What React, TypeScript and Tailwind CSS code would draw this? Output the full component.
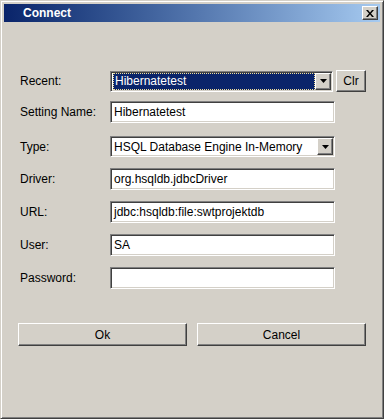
import { ReactNode } from "react";

const sunken =
  "border border-t-[#808080] border-l-[#808080] border-b-white border-r-white shadow-[inset_1px_1px_0_#404040,inset_-1px_-1px_0_#d4d0c8]";
const raised =
  "border border-t-white border-l-white border-b-[#404040] border-r-[#404040] shadow-[inset_-1px_-1px_0_#808080] bg-[#d4d0c8]";

function ArrowButton() {
  return (
    <div className={`${raised} flex h-[17px] w-[16px] shrink-0 items-center justify-center`}>
      <svg width="7" height="4" viewBox="0 0 7 4">
        <path d="M0 0h7L3.5 4z" fill="#000" />
      </svg>
    </div>
  );
}

function Combo({ value, selected, width }: { value: string; selected?: boolean; width: string }) {
  return (
    <div className={`${sunken} ${width} flex h-[21px] items-center bg-white p-[1px]`}>
      <div className="flex h-full flex-1 items-center pl-[1px]">
        {selected ? (
          <div className="flex h-[17px] w-full items-center border border-dotted border-[#f0df9a] bg-[#0a246a] pl-[1px] text-white">
            {value}
          </div>
        ) : (
          <span className="pl-[1px]">{value}</span>
        )}
      </div>
      <ArrowButton />
    </div>
  );
}

function Field({ value }: { value?: string }) {
  return (
    <div className={`${sunken} flex h-[22px] w-[225px] items-center bg-white pl-[3px]`}>
      {value}
    </div>
  );
}

function Row({ label, top, children }: { label: string; top: string; children: ReactNode }) {
  return (
    <div className={`flex items-center ${top}`}>
      <div className="w-[90px]">{label}</div>
      {children}
    </div>
  );
}

export default function App() {
  return (
    <div className="h-[419px] w-[384px] bg-[#d4d0c8] font-['Liberation_Sans',Arial,sans-serif] text-[12px] text-black">
      <div className="flex h-full w-full flex-col border border-t-[#d4d0c8] border-l-[#d4d0c8] border-b-[#404040] border-r-[#404040] p-[3px] shadow-[inset_1px_1px_0_#fff,inset_-1px_-1px_0_#808080]">
        {/* title bar */}
        <div className="flex h-[18px] shrink-0 items-center bg-linear-to-r from-[#0a246a] to-[#a6caf0] pl-[19px] pr-[2px]">
          <span className="flex-1 font-bold text-white">Connect</span>
          <div className={`${raised} flex h-[14px] w-[16px] items-center justify-center`}>
            <svg width="8" height="7" viewBox="0 0 8 7">
              <path d="M0 0h2l2 2.5L6 0h2L5 3.5 8 7H6L4 4.5 2 7H0l3-3.5z" fill="#000" />
            </svg>
          </div>
        </div>

        {/* form */}
        <div className="flex flex-col pl-[16px]">
          <Row label="Recent:" top="mt-[48px]">
            <Combo value="Hibernatetest" selected width="w-[223px]" />
            <div className={`${raised} ml-[3px] flex h-[22px] w-[30px] items-center justify-center`}>Clr</div>
          </Row>
          <Row label="Setting Name:" top="mt-[9px]">
            <Field value="Hibernatetest" />
          </Row>
          <Row label="Type:" top="mt-[13px]">
            <Combo value="HSQL Database Engine In-Memory" width="w-[225px]" />
          </Row>
          <Row label="Driver:" top="mt-[11px]">
            <Field value="org.hsqldb.jdbcDriver" />
          </Row>
          <Row label="URL:" top="mt-[11px]">
            <Field value="jdbc:hsqldb:file:swtprojektdb" />
          </Row>
          <Row label="User:" top="mt-[11px]">
            <Field value="SA" />
          </Row>
          <Row label="Password:" top="mt-[11px]">
            <Field />
          </Row>
          <div className="mt-[34px] flex gap-[10px]">
            <div className={`${raised} -ml-[2px] flex h-[23px] w-[169px] items-center justify-center`}>Ok</div>
            <div className={`${raised} flex h-[23px] w-[169px] items-center justify-center`}>Cancel</div>
          </div>
        </div>
      </div>
    </div>
  );
}
